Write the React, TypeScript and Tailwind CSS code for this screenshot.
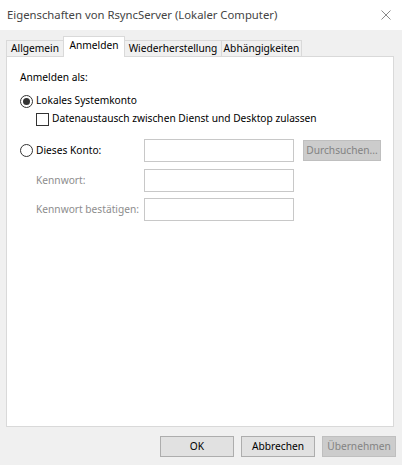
import React from "react";

const font = { fontFamily: '"Noto Sans", "Open Sans", sans-serif' };

export default function App() {
  return (
    <div className="w-[402px] h-[465px] bg-[#f0f0f0] flex flex-col text-[10.2px] text-black overflow-hidden" style={font}>
      {/* Title bar */}
      <div className="h-[30px] bg-white flex items-center justify-between pl-[7px] pr-[11px] shrink-0">
        <span className="text-[11.3px] text-[#444] leading-none">Eigenschaften von RsyncServer (Lokaler Computer)</span>
        <svg width="10" height="10" viewBox="0 0 10 10">
          <path d="M0.5 0.5 L9.5 9.5 M9.5 0.5 L0.5 9.5" stroke="#8a8a8a" strokeWidth="1" fill="none" />
        </svg>
      </div>
      {/* Tabs */}
      <div className="pl-[6px] pr-[8px] pt-[6px] shrink-0">
        <div className="flex items-end h-[20px] relative z-10 whitespace-nowrap">
          <div className="w-[58px] h-[16px] border border-b-0 border-[#d9d9d9] bg-[#f0f0f0] flex items-center justify-center">Allgemein</div>
          <div className="w-[62px] h-[21px] -ml-[1px] -mb-[1px] border border-b-0 border-[#d9d9d9] bg-white flex items-center justify-center pb-[3px]">Anmelden</div>
          <div className="w-[98px] h-[16px] -ml-[1px] border border-b-0 border-[#d9d9d9] bg-[#f0f0f0] flex items-center justify-center">Wiederherstellung</div>
          <div className="w-[81px] h-[16px] -ml-[1px] border border-b-0 border-[#d9d9d9] bg-[#f0f0f0] flex items-center justify-center">Abhängigkeiten</div>
        </div>
      </div>
      {/* Panel */}
      <div className="ml-[6px] mr-[8px] h-[371px] bg-white border border-[#d9d9d9] shrink-0 flex flex-col pl-[13px] pt-[12px] whitespace-nowrap">
        <div className="leading-[16px] h-[16px]">Anmelden als:</div>
        <div className="flex items-center mt-[8px] h-[16px]">
          <div className="w-[13px] h-[13px] rounded-full border border-[#333] flex items-center justify-center">
            <div className="w-[7px] h-[7px] rounded-full bg-[#333]" />
          </div>
          <span className="ml-[3px]">Lokales Systemkonto</span>
        </div>
        <div className="flex items-center ml-[16px] mt-[2px] h-[16px]">
          <div className="w-[13px] h-[13px] border border-[#333]" />
          <span className="ml-[3px]">Datenaustausch zwischen Dienst und Desktop zulassen</span>
        </div>
        <div className="flex items-center mt-[12px] h-[23px]">
          <div className="w-[124px] flex items-center">
            <div className="w-[13px] h-[13px] rounded-full border border-[#333]" />
            <span className="ml-[3px]">Dieses Konto:</span>
          </div>
          <div className="w-[150px] h-[23px] border border-[#c8c8c8] bg-white" />
          <div className="ml-[9px] w-[78px] h-[21px] bg-[#cccccc] border border-[#bfbfbf] text-[#838383] flex items-center justify-center">Durchsuchen...</div>
        </div>
        <div className="flex items-center mt-[7px] h-[23px]">
          <div className="w-[124px] pl-[16px] text-[#8d8d8d]">Kennwort:</div>
          <div className="w-[150px] h-[23px] border border-[#c8c8c8] bg-white" />
        </div>
        <div className="flex items-center mt-[6px] h-[23px]">
          <div className="w-[124px] pl-[16px] text-[#8d8d8d]">Kennwort bestätigen:</div>
          <div className="w-[150px] h-[23px] border border-[#c8c8c8] bg-white" />
        </div>
      </div>
      {/* Buttons */}
      <div className="flex justify-end gap-[7px] pr-[6px] mt-[9px]">
        <div className="w-[74px] h-[21px] bg-[#e1e1e1] border border-[#adadad] flex items-center justify-center">OK</div>
        <div className="w-[74px] h-[21px] bg-[#e1e1e1] border border-[#adadad] flex items-center justify-center">Abbrechen</div>
        <div className="w-[74px] h-[21px] bg-[#cccccc] border border-[#bfbfbf] text-[#838383] flex items-center justify-center">Übernehmen</div>
      </div>
    </div>
  );
}
